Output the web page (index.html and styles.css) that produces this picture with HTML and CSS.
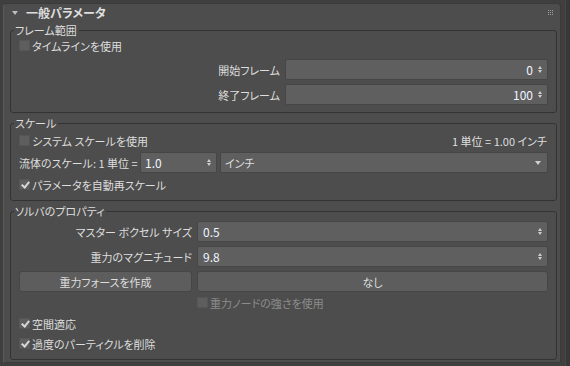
FILE: index.html
```html
<!DOCTYPE html>
<html lang="ja">
<head>
  <meta charset="UTF-8" />
  <title>一般パラメータ</title>
  <link rel="stylesheet" href="styles.css">
</head>
<body>
  <div class="frame">
    <div class="rollout">
      <div class="rollout-header">
        <span class="caret"></span>
        <span class="rollout-title">一般パラメータ</span>
        <span class="grip">
          <i></i><i></i><i></i><i></i><i></i><i></i><i></i><i></i><i></i>
        </span>
      </div>

      <fieldset class="group">
        <legend>フレーム範囲</legend>
        <label class="check"><span class="box"></span>タイムラインを使用</label>
        <div class="field-row">
          <span class="label">開始フレーム</span>
          <div class="spinner wide"><span class="value">0</span><span class="arrows"></span></div>
        </div>
        <div class="field-row">
          <span class="label">終了フレーム</span>
          <div class="spinner wide"><span class="value">100</span><span class="arrows"></span></div>
        </div>
      </fieldset>

      <fieldset class="group">
        <legend>スケール</legend>
        <div class="split-row">
          <label class="check"><span class="box"></span>システム スケールを使用</label>
          <span class="unit-info">1 単位 = 1.00 インチ</span>
        </div>
        <div class="scale-row">
          <span class="scale-label">流体のスケール: 1 単位 =</span>
          <div class="spinner small left"><span class="value">1.0</span><span class="arrows"></span></div>
          <div class="dropdown"><span>インチ</span><span class="drop-arrow"></span></div>
        </div>
        <label class="check"><span class="box checked"></span>パラメータを自動再スケール</label>
      </fieldset>

      <fieldset class="group solver">
        <legend>ソルバのプロパティ</legend>
        <div class="solver-grid">
          <span class="label">マスター ボクセル サイズ</span>
          <div class="spinner left"><span class="value">0.5</span><span class="arrows"></span></div>
          <span class="label">重力のマグニチュード</span>
          <div class="spinner left"><span class="value">9.8</span><span class="arrows"></span></div>
          <button class="btn">重力フォースを作成</button>
          <button class="btn">なし</button>
          <span></span>
          <label class="check disabled"><span class="box"></span>重力ノードの強さを使用</label>
        </div>
        <label class="check"><span class="box checked"></span>空間適応</label>
        <label class="check"><span class="box checked"></span>過度のパーティクルを削除</label>
      </fieldset>
    </div>
    <div class="scrollbar"></div>
  </div>
</body>
</html>
```

FILE: styles.css
```css
:root {
  --bg-color: #3f3f3f;
  --panel-bg: #4d4d4d;
  --field-bg: #5f5f5f;
  --field-border: #464646;
  --group-border: #333333;
  --text-color: #dedede;
  --value-color: #f0f4ff;
  --disabled-color: #8c8c8c;
  --font-family: "Noto Sans CJK JP", "Liberation Sans", sans-serif;
}

* {
  box-sizing: border-box;
}

html, body {
  margin: 0;
  padding: 0;
  height: 100%;
  overflow: hidden;
  background-color: var(--bg-color);
  color: var(--text-color);
  font-family: var(--font-family);
  font-size: 11px;
  line-height: 14px;
  font-feature-settings: "palt";
}

.frame {
  display: flex;
  height: 366px;
}

.rollout {
  width: 558px;
  height: 360px;
  margin: 3px 0 0 3px;
  background-color: var(--panel-bg);
  border: 1px solid #3a3a3a;
  border-left-color: #5a5a5a;
  border-radius: 4px 4px 0 0;
}

.scrollbar {
  width: 5px;
  margin-left: 4px;
  background-color: #383838;
  border-left: 1px solid #464646;
}

.rollout-header {
  display: flex;
  align-items: center;
  height: 17px;
  padding: 0 7px 0 8px;
}

.caret {
  width: 0;
  height: 0;
  border-left: 3px solid transparent;
  border-right: 3px solid transparent;
  border-top: 4px solid #bdbdbd;
  margin-right: 8px;
}

.rollout-title {
  font-weight: 700;
  font-size: 12px;
  flex: 1;
}

.grip {
  display: grid;
  grid-template-columns: repeat(3, 1px);
  gap: 1px;
}

.grip i {
  width: 1px;
  height: 1px;
  background-color: #a0a0a0;
}

.group {
  margin: 2px 3px 0 6px;
  padding: 0 8px 7px 8px;
  border: 1px solid var(--group-border);
  border-radius: 3px;
  min-width: 0;
}

.group + .group {
  margin-top: 3px;
}

legend {
  padding: 0 2px 0 1px;
  margin-left: -5px;
  line-height: 14px;
}

.check {
  display: flex;
  align-items: center;
  height: 17px;
  white-space: nowrap;
}

.box {
  width: 11px;
  height: 11px;
  margin-right: 2px;
  background-color: #5e5e5e;
  border: 1px solid #555;
  position: relative;
}

.box.checked::after {
  content: "";
  position: absolute;
  left: 3px;
  top: 0;
  width: 3px;
  height: 6px;
  border: solid #d8d8d8;
  border-width: 0 2px 2px 0;
  transform: rotate(40deg);
}

.check.disabled {
  color: var(--disabled-color);
}

.field-row {
  display: flex;
  justify-content: flex-end;
  align-items: center;
  gap: 5px;
  margin-top: 4px;
}

.field-row:first-of-type {
  margin-top: 5px;
}

.spinner,
.dropdown {
  display: flex;
  align-items: center;
  height: 21px;
  background-color: var(--field-bg);
  border: 1px solid var(--field-border);
  border-radius: 2px;
  padding: 0 4px 0 6px;
  color: var(--value-color);
  font-size: 12px;
}

.dropdown {
  font-size: 11px;
}

.spinner.wide {
  width: 263px;
}

.spinner .value {
  flex: 1;
  text-align: right;
  padding-right: 5px;
}

.spinner.left .value {
  text-align: left;
}

.arrows {
  display: flex;
  flex-direction: column;
  gap: 1px;
  width: 5px;
}

.arrows::before,
.arrows::after {
  content: "";
  width: 0;
  height: 0;
  border-left: 2.5px solid transparent;
  border-right: 2.5px solid transparent;
}

.arrows::before {
  border-bottom: 3px solid #cfcfcf;
}

.arrows::after {
  border-top: 3px solid #cfcfcf;
}

.split-row {
  display: flex;
  justify-content: space-between;
  align-items: center;
  margin-top: 2px;
}

.unit-info {
  padding-right: 1px;
}

.scale-row {
  display: flex;
  align-items: center;
  gap: 3px;
  margin: 3px 0 3px;
}

.scale-label {
  width: 118px;
  white-space: nowrap;
}

.spinner.small {
  width: 77px;
  padding-left: 4px;
}

.dropdown {
  flex: 1;
  color: var(--text-color);
  padding: 0 6px 0 4px;
  justify-content: space-between;
}

.drop-arrow {
  width: 0;
  height: 0;
  border-left: 3px solid transparent;
  border-right: 3px solid transparent;
  border-top: 4px solid #cfcfcf;
}

.solver-grid {
  display: grid;
  grid-template-columns: 173px 1fr;
  column-gap: 5px;
  row-gap: 4px;
  align-items: center;
  margin-top: 3px;
}

.solver-grid .label {
  text-align: right;
  white-space: nowrap;
}

.solver-grid .spinner {
  padding-left: 5px;
}

.btn {
  height: 21px;
  background-color: #5d5d5d;
  border: 1px solid var(--field-border);
  border-radius: 3px;
  color: var(--text-color);
  font-family: var(--font-family);
  font-size: 11px;
  font-feature-settings: "palt";
  padding: 0;
}

.solver-grid .check {
  margin-top: -2px;
}

.solver-grid + .check {
  margin-top: 4px;
}

.solver .check + .check {
  margin-top: 3px;
}
```
